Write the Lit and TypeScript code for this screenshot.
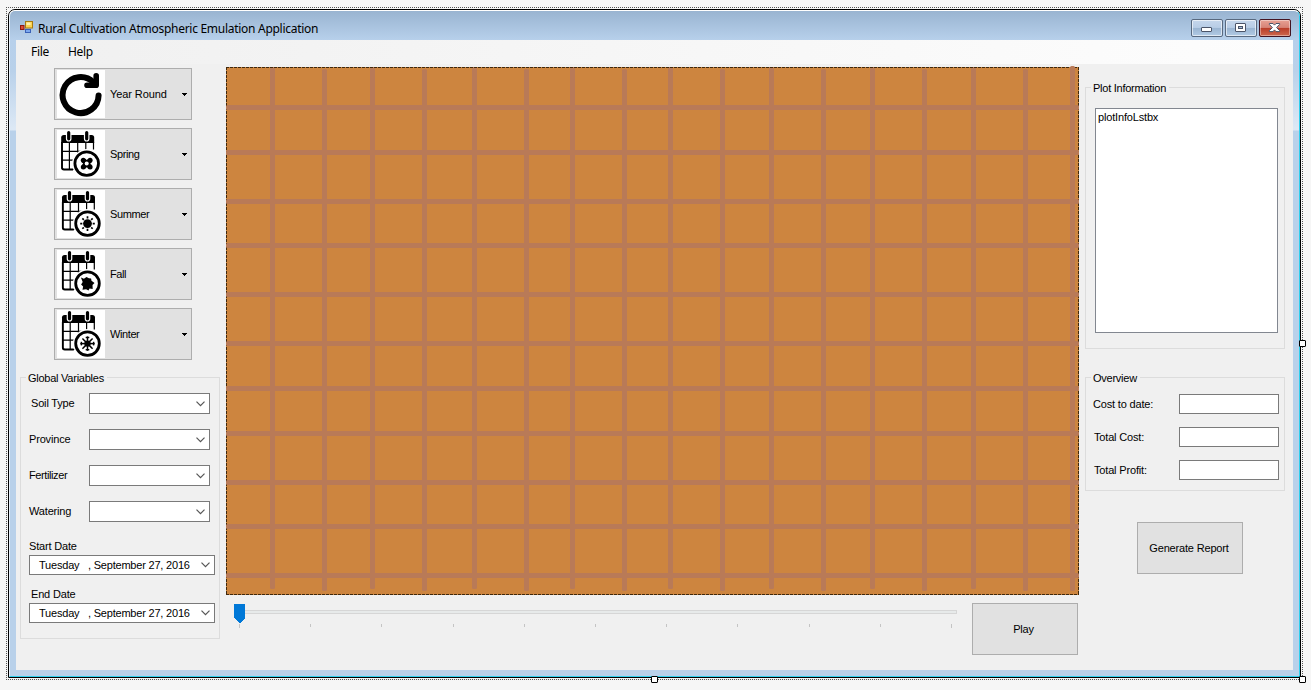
import { LitElement, html, svg, css } from "lit";
import { customElement, property } from "lit/decorators.js";

type Season = "year" | "spring" | "summer" | "fall" | "winter";

const ray = (n: number, a: number, b: number, w: number) =>
  Array.from({ length: n }, (_, i) => {
    const t = (i * 2 * Math.PI) / n;
    return svg`<line x1=${a * Math.cos(t)} y1=${a * Math.sin(t)} x2=${b * Math.cos(t)} y2=${b * Math.sin(t)} stroke="#000" stroke-width=${w}></line>`;
  });

const emblems: Record<string, unknown> = {
  spring: svg`
    <rect x="-4.6" y="-4.6" width="9.2" height="9.2"></rect>
    <circle cx="-3.4" cy="-3.4" r="2.5"></circle><circle cx="3.4" cy="-3.4" r="2.5"></circle>
    <circle cx="-3.4" cy="3.4" r="2.5"></circle><circle cx="3.4" cy="3.4" r="2.5"></circle>
    <circle r="2" fill="#fff"></circle>
    <path d="M0-6v2.2M0 3.8V6M-6 0h2.2M3.8 0H6" stroke="#fff" stroke-width="1.4"></path>`,
  summer: svg`<circle r="4.4"></circle>${ray(8, 5.2, 7.3, 1.7)}`,
  fall: svg`<path d="M-6.6-6-3.6-4.8-1-6.6 1.4-5.4 3.6-5 4-2.8 7-.6 5 1.4 5.2 5.4 2 4.8 1 6.8-1.4 5.6-5 6.2-4.4 3-6.4 1-4.8-1.6Z"></path>`,
  winter: svg`<circle r="3.2"></circle>${ray(8, 0, 7.2, 1.5)}${ray(4, 5.4, 6.8, 3.6)}`,
};

@customElement("season-button")
class SeasonButton extends LitElement {
  @property() label = "";
  @property() season: Season = "year";

  static styles = css`
    :host { display: block; }
    .btn { box-sizing: border-box; width: 138px; height: 52px; border: 1px solid #adadad; background: #e1e1e1; display: flex; align-items: center; padding: 0 4px 0 2px; }
    .icon { width: 48px; height: 48px; background: #fff; flex: none; display: block; margin-bottom: 2px; margin-top: 1px; }
    .text { flex: 1; margin-left: 5px; letter-spacing: -0.4px; }
    .text.wide { letter-spacing: -0.1px; }
    .arrow { width: 5px; height: 3px; display: block; }
  `;

  private icon() {
    if (this.season === "year") {
      return svg`<svg class="icon" viewBox="0 0 48 48">
        <path d="M36.5 12.5A18 18 0 1 0 41.6 25.4" fill="none" stroke="#000" stroke-width="6" stroke-linecap="round"></path>
        <path d="M39.2 5.8v9.4H30" fill="none" stroke="#000" stroke-width="5.6" stroke-linecap="round" stroke-linejoin="round"></path>
      </svg>`;
    }
    const dx = this.season === "spring" ? 0 : 0.8;
    return svg`<svg class="icon" viewBox="0 0 48 48">
      <g transform="translate(${dx} 0)">
        <path d="M5 12v25.5q0 2 2 2H17M12.4 12v27M20.7 12v17M28.8 12v9M36.5 12v7.5M5 21.4h19.5M5 30.2h13" fill="none" stroke="#000" stroke-width="1.2"></path>
        <path d="M5 12v25.5q0 2 2 2H16" fill="none" stroke="#000" stroke-width="1.8"></path>
        <path d="M4.2 13V7.6q0-2.6 2.6-2.6h27.8q2.6 0 2.6 2.6V13Z"></path>
        <path d="M11.7 2.6v6.2M29.7 2.6v6.2" stroke="#fff" stroke-width="5.6" stroke-linecap="round"></path>
        <path d="M11.7 2.6v6.2M29.7 2.6v6.2" stroke="#000" stroke-width="3.2" stroke-linecap="round"></path>
        <circle cx="29.7" cy="33.6" r="14.6" fill="#fff"></circle>
        <circle cx="29.7" cy="33.6" r="11.8" fill="none" stroke="#000" stroke-width="2.8"></circle>
        <g transform="translate(29.7 33.6)">${emblems[this.season]}</g>
      </g>
    </svg>`;
  }

  render() {
    return html`<div class="btn">${this.icon()}<span class="text ${this.season === "year" ? "wide" : ""}">${this.label}</span>
      <svg class="arrow" viewBox="0 0 5 3" shape-rendering="crispEdges"><path d="M0 0h5v1H0zM1 1h3v1H1zM2 2h1v1H2z"></path></svg></div>`;
  }
}

@customElement("group-box")
class GroupBox extends LitElement {
  @property() caption = "";
  static styles = css`
    :host { display: block; box-sizing: border-box; border: 1px solid #dcdcdc; }
    .caption { display: block; width: max-content; height: 12px; margin: -6px 0 0 5px; padding: 0 3px 0 2px; background: #f0f0f0; letter-spacing: -0.25px; }
  `;
  render() {
    return html`<span class="caption">${this.caption}</span><slot></slot>`;
  }
}

@customElement("drop-field")
class DropField extends LitElement {
  @property() value = "";
  static styles = css`
    :host { display: flex; box-sizing: border-box; border: 1px solid #7a7a7a; background: #fff; align-items: center; padding: 0 4px 0 9px; }
    .value { flex: 1; white-space: pre; letter-spacing: -0.2px; }
    .chev { width: 9px; height: 6px; flex: none; display: block; }
  `;
  render() {
    return html`<span class="value">${this.value}</span>
      <svg class="chev" viewBox="0 0 9 6"><path d="M.5.7 4.5 4.7 8.5.7" fill="none" stroke="#555" stroke-width="1.2"></path></svg>`;
  }
}

const columns = [270, 322, 370, 422, 472, 524, 570, 622, 668, 720, 769, 821, 870, 922, 971, 1023, 1070];
const rows = [105, 150, 199, 243, 292, 341, 386, 431, 480, 524, 573];
const ticks = [239, 310, 381, 453, 524, 595, 666, 737, 809, 880, 951];

@customElement("app-root")
class AppRoot extends LitElement {
  static styles = css`
    :host { display: block; box-sizing: border-box; width: 1311px; height: 690px; padding: 7px 0 0 6px; background: #f6f6f6; position: relative; overflow: hidden; font: 11px/13px "Liberation Sans", Arial, sans-serif; letter-spacing: -0.17px; color: #000; }
    .outline { box-sizing: border-box; width: 1297px; height: 673px; border: 1px dotted #555; padding: 1px; }
    .window { box-sizing: border-box; width: 1293px; height: 669px; border: 1px solid #000; border-radius: 7px 7px 0 0; overflow: hidden; }
    .frame { box-sizing: border-box; height: 667px; border: 1px solid; border-color: #fff #2fd0ee #2fd0ee #e8f1fa; border-radius: 6px 6px 0 0; padding: 0 6px 6px; background: linear-gradient(#99b4d1 0, #b7d0eb 29px, #b9d1ea 60px, #dce8f5 117px, #dce8f5 119px, #b9d1ea 120px); }
    .title { display: flex; align-items: center; height: 29px; padding: 0 2px 0 4px; }
    .logo { width: 13px; height: 13px; margin-top: 3px; display: block; }
    .name { flex: 1; margin: 6px 0 0 5px; font: 12px/16px "Noto Sans", "Open Sans", sans-serif; letter-spacing: -0.28px; white-space: nowrap; }
    .controls { display: flex; gap: 2px; margin-top: 4px; }
    .ctl { display: block; width: 32px; height: 18px; }
    .menu { display: flex; height: 24px; box-sizing: border-box; padding: 4px 15px; gap: 19px; background: linear-gradient(90deg, #f0f0f0, #fdfdfd); font: 12px/16px "Noto Sans", "Open Sans", sans-serif; letter-spacing: -0.3px; }
    .client { display: flex; height: 606px; background: #f0f0f0; }
    .left { width: 204px; padding: 4px 0 0 4px; box-sizing: border-box; flex: none; }
    .seasons { display: flex; flex-direction: column; gap: 8px; margin: 0 0 17px 34px; }
    .globals { width: 200px; height: 262px; }
    .row { display: flex; height: 21px; margin: 0 9px 15px 8px; }
    .row .lab { width: 60px; padding-top: 4px; }
    .row .lab.in { padding-left: 2px; width: 58px; }
    .row .lab.tight { letter-spacing: -0.4px; }
    .row drop-field { width: 121px; }
    .first { margin-top: 9px; }
    .dates { margin: 16px 0 0 8px; }
    .dlab { display: block; padding-top: 2px; height: 15px; }
    .dlab.in { padding: 13px 0 0 2px; }
    .dates drop-field { width: 186px; height: 20px; }
    .center { width: 853px; margin: 3px 0 0 6px; flex: none; }
    .field { display: block; width: 853px; height: 529px; margin-top: -1px; }
    .bottom { display: flex; justify-content: space-between; }
    .slider { display: block; width: 724px; height: 30px; margin: 8px 0 0 8px; }
    .push { display: flex; align-items: center; justify-content: center; box-sizing: border-box; width: 106px; height: 52px; border: 1px solid #adadad; background: #e1e1e1; }
    .play { margin: 8px 1px 0 0; padding-right: 3px; }
    .right { width: 200px; margin: 23px 0 0 6px; flex: none; }
    .plot { height: 262px; margin-bottom: 28px; }
    .list { box-sizing: border-box; width: 183px; height: 225px; margin: 14px 0 0 9px; border: 1px solid #828790; background: #fff; padding: 2px; }
    .overview { height: 114px; }
    .cost { display: flex; height: 20px; margin: 0 5px 13px 8px; justify-content: space-between; }
    .cost.top { margin-top: 10px; margin-left: 7px; }
    .cost span { padding-top: 4px; }
    .entry { box-sizing: border-box; width: 100px; height: 20px; border: 1px solid #7a7a7a; background: #fff; }
    .report { margin: 31px 0 0 52px; padding-right: 2px; }
    .grip { position: absolute; box-sizing: border-box; width: 7px; height: 7px; border: 1px solid #000; border-radius: 1px; background: #fff; }
    .east { left: 1299px; top: 340px; }
    .south { left: 651px; top: 676px; }
    .corner { left: 1299px; top: 676px; }
  `;

  private control(kind: "min" | "max" | "close") {
    const close = kind === "close";
    const id = `g-${kind}`;
    const glyph = {
      min: svg`<rect x="10.5" y="8.5" width="10" height="4" rx=".5" fill="#fff" stroke="#4b5468"></rect>`,
      max: svg`<rect x="10.5" y="4.5" width="10" height="8" rx=".5" fill="#fff" stroke="#4b5468"></rect><rect x="13.5" y="7.5" width="4" height="2" fill="#a8bfd8" stroke="#4b5468"></rect>`,
      close: svg`<path d="M10.4 4.5H14l1.5 1.6L17 4.5h3.6v1L17.6 8.6l3 3v1H17l-1.5-1.7-1.5 1.7h-3.6v-1l3-3-3-3.1Z" fill="#fff" stroke="#4b5468"></path>`,
    }[kind];
    return html`<svg class="ctl" viewBox="0 0 32 18">
      <defs><linearGradient id=${id} x2="0" y2="1">
        <stop offset="0" stop-color=${close ? "#e8a396" : "#c6d7ec"}></stop>
        <stop offset=".47" stop-color=${close ? "#d78376" : "#b8cde6"}></stop>
        <stop offset=".48" stop-color=${close ? "#b83a26" : "#98b3d0"}></stop>
        <stop offset="1" stop-color=${close ? "#cf6a50" : "#b3cce6"}></stop>
      </linearGradient></defs>
      <rect x=".5" y=".5" width="31" height="17" rx="1.5" fill="url(#${id})" stroke=${close ? "#431422" : "#58697f"}></rect>
      <rect x="1.5" y="1.5" width="29" height="15" rx="1" fill="none" stroke="#fff" stroke-opacity=${close ? ".4" : ".6"}></rect>
      ${glyph}
    </svg>`;
  }

  private plot() {
    return html`<svg class="field" viewBox="226 66 853 529">
      <rect x="226" y="67" width="853" height="528" fill="#cd853f"></rect>
      <path d="M226 67.5H1079M226 594.5H1079M226.5 67V595M1078.5 67V595" stroke="#40280c" stroke-dasharray="3 1" fill="none"></path>
      ${rows.map((y) => svg`<rect x="226" y=${y} width="853" height="5" rx="1.5" fill="#b97a57"></rect>`)}
      ${columns.map((x, i) => {
        const top = i === 16 ? 66 : i % 2 ? 69 : 67;
        const end = i === 16 || i % 2 ? 591 : 589;
        return svg`<rect x=${x} y=${top} width="5" height=${end - top} rx="1.5" fill="#b97a57"></rect>`;
      })}
      <path d="M226 67.5H1070" stroke="#40280c" stroke-dasharray="3 1" fill="none"></path>
    </svg>`;
  }

  render() {
    const date = "Tuesday   , September 27, 2016";
    return html`
      <div class="outline"><div class="window"><div class="frame">
        <div class="title">
          <svg class="logo" viewBox="0 0 13 13">
            <rect x="5.5" y=".5" width="7" height="6.5" fill="#fbd451" stroke="#a97a10"></rect>
            <rect x="6.5" y="1.5" width="4" height="2.5" fill="#fff2b0"></rect>
            <rect x=".5" y="4.5" width="3.5" height="4" fill="#dc4a35" stroke="#8e1a10"></rect>
            <rect x="5.5" y="8.5" width="5" height="3" fill="#7da8ee" stroke="#3a62b8"></rect>
          </svg>
          <span class="name">Rural Cultivation Atmospheric Emulation Application</span>
          <div class="controls">${this.control("min")}${this.control("max")}${this.control("close")}</div>
        </div>
        <div class="menu"><span>File</span><span>Help</span></div>
        <div class="client">
          <div class="left">
            <div class="seasons">
              <season-button label="Year Round" season="year"></season-button>
              <season-button label="Spring" season="spring"></season-button>
              <season-button label="Summer" season="summer"></season-button>
              <season-button label="Fall" season="fall"></season-button>
              <season-button label="Winter" season="winter"></season-button>
            </div>
            <group-box class="globals" caption="Global Variables">
              <div class="row first"><span class="lab in">Soil Type</span><drop-field></drop-field></div>
              <div class="row"><span class="lab">Province</span><drop-field></drop-field></div>
              <div class="row"><span class="lab tight">Fertilizer</span><drop-field></drop-field></div>
              <div class="row"><span class="lab">Watering</span><drop-field></drop-field></div>
              <div class="dates">
                <span class="dlab">Start Date</span><drop-field value=${date}></drop-field>
                <span class="dlab in">End Date</span><drop-field value=${date}></drop-field>
              </div>
            </group-box>
          </div>
          <div class="center">
            ${this.plot()}
            <div class="bottom">
              <svg class="slider" viewBox="234 603 724 30" shape-rendering="crispEdges">
                <rect x="234.5" y="610.5" width="722" height="3" fill="#e7eaea" stroke="#d6d6d6"></rect>
                ${ticks.map((x, i) => svg`<rect x=${x} y="624" width="1" height=${i % 10 ? 3 : 4} fill="#c4c4c4"></rect>`)}
                <path d="M234 604h11v14l-5 5h-1l-5-5z" fill="#0078d7"></path>
              </svg>
              <div class="push play">Play</div>
            </div>
          </div>
          <div class="right">
            <group-box class="plot" caption="Plot Information"><div class="list">plotInfoLstbx</div></group-box>
            <group-box class="overview" caption="Overview">
              <div class="cost top"><span>Cost to date:</span><div class="entry"></div></div>
              <div class="cost"><span>Total Cost:</span><div class="entry"></div></div>
              <div class="cost"><span>Total Profit:</span><div class="entry"></div></div>
            </group-box>
            <div class="push report">Generate Report</div>
          </div>
        </div>
      </div></div></div>
      <div class="grip east"></div><div class="grip south"></div><div class="grip corner"></div>
    `;
  }
}
